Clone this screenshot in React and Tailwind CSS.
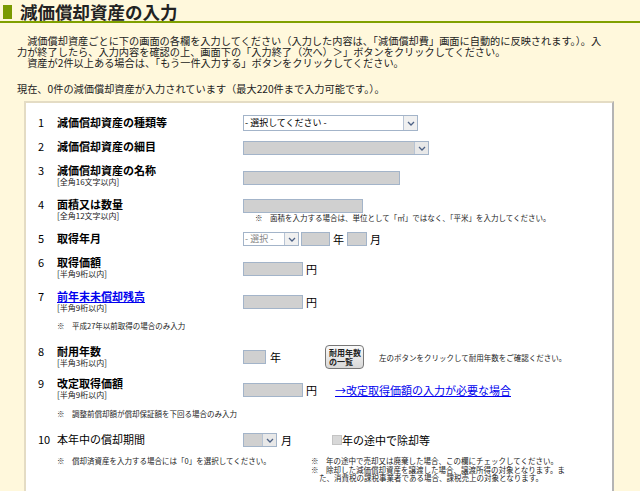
import React from "react";

const box = "h-[14px] bg-[#d0d0d0] border border-[#a3b4c9]";

function Arrow({ grey }) {
  return (
    <div
      className={`w-[14px] h-full border-l border-[#b8c4d4] flex items-center justify-center ${
        grey ? "bg-[#e8e8e8]" : "bg-[#f0f0f0]"
      }`}
    >
      <svg width="8" height="5" viewBox="0 0 8 5">
        <path d="M1 1 L4 4 L7 1" fill="none" stroke="#4d6185" strokeWidth="1.3" />
      </svg>
    </div>
  );
}

function Row({ num, label, sub, h, top, children, link, plain }) {
  return (
    <div className="flex items-start" style={{ height: h }}>
      <div className="w-[19px] text-[11px] leading-[14px] pt-[1px]">{num}</div>
      <div className="w-[186px] pt-[1px]">
        <div
          className={`text-[11px] leading-[14px] ${plain ? "font-normal" : "font-bold"} ${
            link ? "text-[#0000ee] underline" : "text-black"
          }`}
        >
          {label}
        </div>
        {sub && <div className="text-[8px] leading-[10px] text-[#222]">{sub}</div>}
      </div>
      <div className="flex-1" style={{ paddingTop: top }}>
        {children}
      </div>
    </div>
  );
}

function App() {
  return (
    <div className="h-screen w-full overflow-hidden bg-[#fff8dc] text-black font-['Noto_Sans_CJK_JP',sans-serif]">
      {/* header */}
      <div className="h-[23px] border-b-2 border-[#80a000] flex items-start">
        <div className="w-[9px] h-[14px] bg-[#7a9a00] ml-[3px] mt-[5px]" />
        <div className="ml-[8px] mt-[2px] text-[17.5px] leading-[19px] font-bold text-[#222]">
          減価償却資産の入力
        </div>
      </div>

      {/* intro */}
      <div className="pl-[17px] pt-[12px] text-[10.2px] leading-[11px] text-[#222]">
        <div>　減価償却資産ごとに下の画面の各欄を入力してください（入力した内容は、「減価償却費」画面に自動的に反映されます。）。入</div>
        <div>力が終了したら、入力内容を確認の上、画面下の「入力終了（次へ）＞」ボタンをクリックしてください。</div>
        <div>　資産が2件以上ある場合は、「もう一件入力する」ボタンをクリックしてください。</div>
        <div className="mt-[15px]">現在、0件の減価償却資産が入力されています（最大220件まで入力可能です。）。</div>
      </div>

      {/* panel */}
      <div className="ml-[24px] mt-[7px] w-[590px] h-[400px] bg-white border-t-2 border-l-2 border-[#e4dcc4] border-r-2 border-r-[#b4b4b4] pl-[12px] pt-[11px]">
        <Row num="1" label="減価償却資産の種類等" h={24} top={1}>
          <div className="w-[175px] h-[16px] bg-white border border-[#a3b4c9] flex items-center">
            <div className="flex-1 text-[9px] pl-[1px] leading-[14px]">- 選択してください -</div>
            <Arrow />
          </div>
        </Row>
        <Row num="2" label="減価償却資産の細目" h={24} top={3}>
          <div className={`w-[186px] ${box} flex`}>
            <div className="flex-1" />
            <Arrow grey />
          </div>
        </Row>
        <Row num="3" label="減価償却資産の名称" sub="[全角16文字以内]" h={34} top={9}>
          <div className={`w-[157px] ${box}`} />
        </Row>
        <Row num="4" label="面積又は数量" sub="[全角12文字以内]" h={34} top={3}>
          <div className={`w-[120px] ${box}`} />
          <div className="ml-[12px] text-[7.5px] leading-[9px] text-[#222] whitespace-nowrap">
            ※　面積を入力する場合は、単位として「㎡」ではなく、「平米」を入力してください。
          </div>
        </Row>
        <Row num="5" label="取得年月" h={24} top={2}>
          <div className="flex items-center text-[11px]">
            <div className="w-[56px] h-[14px] bg-white border border-[#a3b4c9] flex items-center">
              <div className="flex-1 text-[9px] pl-[1px] text-[#888] leading-[12px]">- 選択 -</div>
              <Arrow />
            </div>
            <div className={`w-[29px] ml-[2px] ${box}`} />
            <span className="ml-[3px] leading-[14px]">年</span>
            <div className={`w-[20px] ml-[3px] ${box}`} />
            <span className="ml-[3px] leading-[14px]">月</span>
          </div>
        </Row>
        <Row num="6" label="取得価額" sub="[半角9桁以内]" h={34} top={8}>
          <div className="flex items-center text-[11px]">
            <div className={`w-[60px] ${box}`} />
            <span className="ml-[3px] leading-[14px]">円</span>
          </div>
        </Row>
        <Row num="7" label="前年末未償却残高" sub="[半角9桁以内]" h={33} top={7} link>
          <div className="flex items-center text-[11px]">
            <div className={`w-[60px] ${box}`} />
            <span className="ml-[3px] leading-[14px]">円</span>
          </div>
        </Row>
        <div className="h-[22px] pl-[19px] text-[7.5px] leading-[10px] text-[#222]">
          ※　平成27年以前取得の場合のみ入力
        </div>
        <Row num="8" label="耐用年数" sub="[半角3桁以内]" h={32} top={2}>
          <div className="flex items-start text-[11px]">
            <div className={`w-[23px] mt-[5px] ${box}`} />
            <span className="ml-[4px] mt-[5px] leading-[14px]">年</span>
            <button className="ml-[44px] w-[39px] h-[24px] rounded-[4px] border border-[#777] bg-gradient-to-b from-[#fafafa] to-[#d8d8d8] text-[8px] leading-[9px] font-bold text-[#222] text-left pl-[3px]">
              耐用年数
              <br />
              の一覧
            </button>
            <span className="ml-[15px] mt-[8px] text-[7.5px] leading-[9px] text-[#222] whitespace-nowrap">
              左のボタンをクリックして耐用年数をご確認ください。
            </span>
          </div>
        </Row>
        <Row num="9" label="改定取得価額" sub="[半角9桁以内]" h={34} top={8}>
          <div className="flex items-center text-[11px]">
            <div className={`w-[60px] ${box}`} />
            <span className="ml-[3px] leading-[14px]">円</span>
            <span className="ml-[18px] leading-[14px] text-[#0000ee] underline whitespace-nowrap">
              →改定取得価額の入力が必要な場合
            </span>
          </div>
        </Row>
        <div className="h-[22px] pl-[19px] text-[7.5px] leading-[10px] text-[#222]">
          ※　調整前償却額が償却保証額を下回る場合のみ入力
        </div>
        <Row num="10" label="本年中の償却期間" h={25} top={2} plain>
          <div className="flex items-center text-[11px]">
            <div className={`w-[34px] ${box} flex`}>
              <div className="flex-1" />
              <Arrow grey />
            </div>
            <span className="ml-[4px] leading-[14px]">月</span>
            <div className="ml-[40px] w-[10px] h-[10px] bg-[#d8d8d8] border border-[#c4c4c4]" />
            <span className="leading-[14px]">年の途中で除却等</span>
          </div>
        </Row>
        <div className="flex text-[7.5px] leading-[8.5px] text-[#222] pt-[1px]">
          <div className="w-[273px] pl-[19px] whitespace-nowrap">
            ※　償却済資産を入力する場合には「0」を選択してください。
          </div>
          <div className="whitespace-nowrap">
            <div>※　年の途中で売却又は廃棄した場合、この欄にチェックしてください。</div>
            <div>※　除却した減価償却資産を譲渡した場合、譲渡所得の対象となります。ま</div>
            <div className="pl-[8px]">た、消費税の課税事業者である場合、課税売上の対象となります。</div>
          </div>
        </div>
      </div>
    </div>
  );
}

export default App;
